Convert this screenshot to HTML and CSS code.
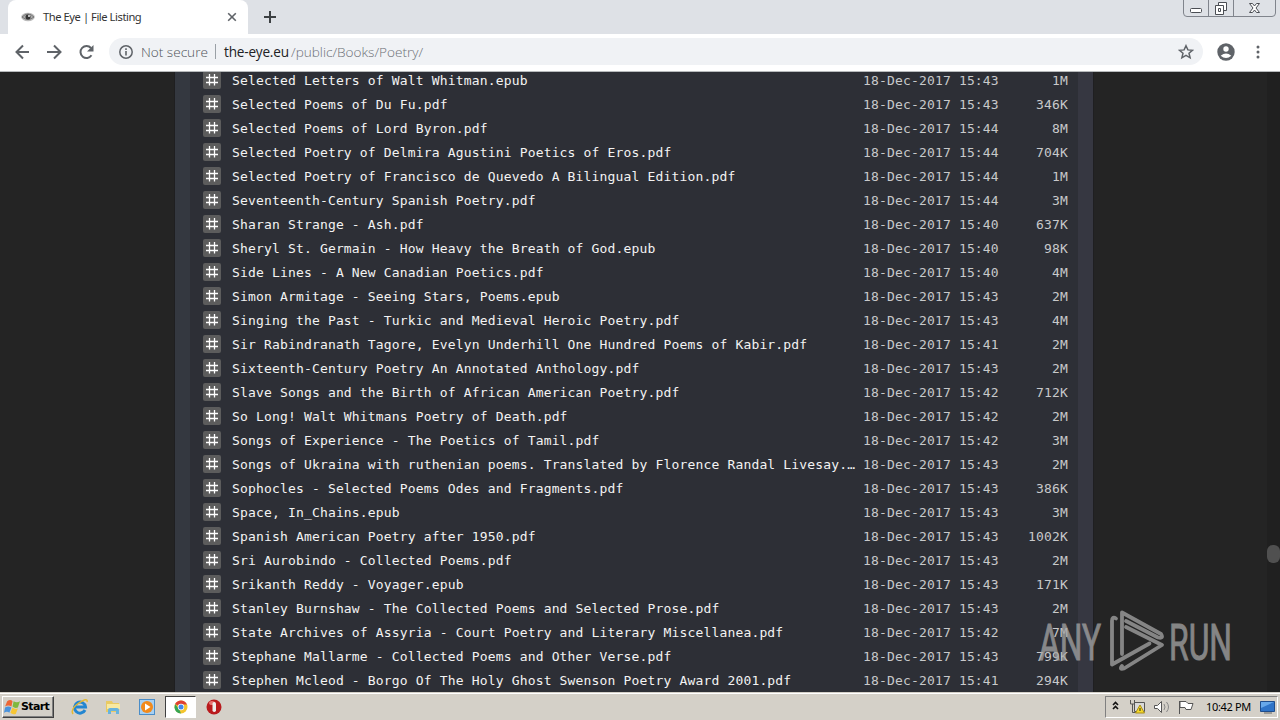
FILE: index.html
```html
<!DOCTYPE html>
<html lang="en">
<head>
<meta charset="utf-8">
<title>The Eye | File Listing</title>
<link rel="stylesheet" href="styles.css">
</head>
<body>
<svg class="defs" width="0" height="0"><symbol id="hash" viewBox="0 0 18 18"><rect width="18" height="18" rx="2" fill="#5c5c5c"/><path d="M6.500 3v11.500M11.500 3v11.500M3 6.500h12M3 11.500h12" stroke="#fff" stroke-width="1.300" fill="none"/></symbol></svg>
<div class="screen">
<header class="tabstrip">
  <div class="tab">
    <svg class="favicon" width="14" height="10" viewBox="0 0 14 10"><ellipse cx="7" cy="5" rx="6.8" ry="4.2" fill="#bbb"/><path d="M1 5Q7-1 13 5Q7 10 1 5" fill="#aaa" stroke="#777"/><circle cx="7" cy="5" r="2.5" fill="#333"/><circle cx="8" cy="4" r="1" fill="#eee"/></svg>
    <span class="tab-title">The Eye | File Listing</span>
    <svg class="tab-close" width="10" height="10" viewBox="0 0 10 10"><path d="M1.2 1.2l7.6 7.6M8.8 1.2L1.2 8.8" stroke="#5f6368" stroke-width="1.6"/></svg>
  </div>
  <svg class="plus" width="12" height="12" viewBox="0 0 12 12"><path d="M6 0v12M0 6h12" stroke="#3c4043" stroke-width="2"/></svg>
  <svg class="winbtns" width="94" height="18" viewBox="0 0 94 18"><path d="M.5 0v13q0 3.500 3.500 3.500h85q3.500 0 3.500-3.500V0M25.500 0v16M50.500 0v16" fill="none" stroke="#80848c"/><rect x="7.500" y="8.500" width="11" height="4" rx="1" fill="#fff" stroke="#4b4e54"/><path d="M35.500 5.500v-3h8v8h-3M32.500 5.500h8v9h-8zM35.500 8.500h2v3h-2z" fill="#fff" stroke="#4b4e54"/><path d="M66.500 3.500h3l2 2.500 2-2.500h3l-3.500 4.500 3.500 4.500h-3l-2-2.500-2 2.500h-3l3.500-4.500z" fill="#fff" stroke="#4b4e54"/></svg>
</header>
<div class="toolbar">
  <svg class="nav" width="80" height="16" viewBox="0 0 80 16" fill="none" stroke="#5f6368" stroke-width="2"><path d="M14 8H2M8 1.500L1.500 8 8 14.500M32 8h13M39 1.500L45.500 8 39 14.500M76.500 11.300A6 6 0 1 1 76 4"/><path d="M78.500 1v6.500H72z" fill="#5f6368" stroke="none"/></svg>
  <div class="omnibox">
    <svg width="14" height="14" viewBox="0 0 14 14"><circle cx="7" cy="7" r="6.200" fill="none" stroke="#5f6368" stroke-width="1.500"/><path d="M7 6v4.500M7 3.300v1.600" stroke="#5f6368" stroke-width="1.600"/></svg>
    <span class="secure">Not secure</span><span class="divider"></span>
    <span class="host">the-eye.eu</span><span class="path">/public/Books/Poetry/</span>
    <svg class="star" width="16" height="16" viewBox="0 0 16 16"><path d="M8 1.700l1.900 4.200 4.600.4-3.500 3 1.100 4.500L8 11.400l-4.100 2.400L5 9.300l-3.500-3 4.600-.4z" fill="none" stroke="#5f6368" stroke-width="1.500"/></svg>
  </div>
  <svg class="avatar" width="18" height="18" viewBox="0 0 18 18"><circle cx="9" cy="9" r="8.700" fill="#5f6368"/><circle cx="9" cy="6" r="2.700" fill="#fff"/><path d="M3.700 12.700Q9 8.300 14.300 12.700Q9 17.300 3.700 12.700" fill="#fff"/></svg>
  <svg class="dots" width="4" height="14" viewBox="0 0 4 14" fill="#5f6368"><circle cx="2" cy="2" r="1.500"/><circle cx="2" cy="7" r="1.500"/><circle cx="2" cy="12" r="1.500"/></svg>
</div>
<main class="page">
  <div class="panel"><ul class="files">
    <li><svg><use href="#hash"/></svg><a>Selected Letters of Walt Whitman.epub</a><time>18-Dec-2017 15:43</time><b>1M</b></li>
    <li><svg><use href="#hash"/></svg><a>Selected Poems of Du Fu.pdf</a><time>18-Dec-2017 15:43</time><b>346K</b></li>
    <li><svg><use href="#hash"/></svg><a>Selected Poems of Lord Byron.pdf</a><time>18-Dec-2017 15:44</time><b>8M</b></li>
    <li><svg><use href="#hash"/></svg><a>Selected Poetry of Delmira Agustini Poetics of Eros.pdf</a><time>18-Dec-2017 15:44</time><b>704K</b></li>
    <li><svg><use href="#hash"/></svg><a>Selected Poetry of Francisco de Quevedo A Bilingual Edition.pdf</a><time>18-Dec-2017 15:44</time><b>1M</b></li>
    <li><svg><use href="#hash"/></svg><a>Seventeenth-Century Spanish Poetry.pdf</a><time>18-Dec-2017 15:44</time><b>3M</b></li>
    <li><svg><use href="#hash"/></svg><a>Sharan Strange - Ash.pdf</a><time>18-Dec-2017 15:40</time><b>637K</b></li>
    <li><svg><use href="#hash"/></svg><a>Sheryl St. Germain - How Heavy the Breath of God.epub</a><time>18-Dec-2017 15:40</time><b>98K</b></li>
    <li><svg><use href="#hash"/></svg><a>Side Lines - A New Canadian Poetics.pdf</a><time>18-Dec-2017 15:40</time><b>4M</b></li>
    <li><svg><use href="#hash"/></svg><a>Simon Armitage - Seeing Stars, Poems.epub</a><time>18-Dec-2017 15:43</time><b>2M</b></li>
    <li><svg><use href="#hash"/></svg><a>Singing the Past - Turkic and Medieval Heroic Poetry.pdf</a><time>18-Dec-2017 15:43</time><b>4M</b></li>
    <li><svg><use href="#hash"/></svg><a>Sir Rabindranath Tagore, Evelyn Underhill One Hundred Poems of Kabir.pdf</a><time>18-Dec-2017 15:41</time><b>2M</b></li>
    <li><svg><use href="#hash"/></svg><a>Sixteenth-Century Poetry An Annotated Anthology.pdf</a><time>18-Dec-2017 15:43</time><b>2M</b></li>
    <li><svg><use href="#hash"/></svg><a>Slave Songs and the Birth of African American Poetry.pdf</a><time>18-Dec-2017 15:42</time><b>712K</b></li>
    <li><svg><use href="#hash"/></svg><a>So Long! Walt Whitmans Poetry of Death.pdf</a><time>18-Dec-2017 15:42</time><b>2M</b></li>
    <li><svg><use href="#hash"/></svg><a>Songs of Experience - The Poetics of Tamil.pdf</a><time>18-Dec-2017 15:42</time><b>3M</b></li>
    <li><svg><use href="#hash"/></svg><a>Songs of Ukraina with ruthenian poems. Translated by Florence Randal Livesay.…</a><time>18-Dec-2017 15:43</time><b>2M</b></li>
    <li><svg><use href="#hash"/></svg><a>Sophocles - Selected Poems Odes and Fragments.pdf</a><time>18-Dec-2017 15:43</time><b>386K</b></li>
    <li><svg><use href="#hash"/></svg><a>Space, In_Chains.epub</a><time>18-Dec-2017 15:43</time><b>3M</b></li>
    <li><svg><use href="#hash"/></svg><a>Spanish American Poetry after 1950.pdf</a><time>18-Dec-2017 15:43</time><b>1002K</b></li>
    <li><svg><use href="#hash"/></svg><a>Sri Aurobindo - Collected Poems.pdf</a><time>18-Dec-2017 15:43</time><b>2M</b></li>
    <li><svg><use href="#hash"/></svg><a>Srikanth Reddy - Voyager.epub</a><time>18-Dec-2017 15:43</time><b>171K</b></li>
    <li><svg><use href="#hash"/></svg><a>Stanley Burnshaw - The Collected Poems and Selected Prose.pdf</a><time>18-Dec-2017 15:43</time><b>2M</b></li>
    <li><svg><use href="#hash"/></svg><a>State Archives of Assyria - Court Poetry and Literary Miscellanea.pdf</a><time>18-Dec-2017 15:42</time><b>7M</b></li>
    <li><svg><use href="#hash"/></svg><a>Stephane Mallarme - Collected Poems and Other Verse.pdf</a><time>18-Dec-2017 15:43</time><b>799K</b></li>
    <li><svg><use href="#hash"/></svg><a>Stephen Mcleod - Borgo Of The Holy Ghost Swenson Poetry Award 2001.pdf</a><time>18-Dec-2017 15:41</time><b>294K</b></li>
  </ul></div>
  <div class="scrollbar"><div class="thumb"></div></div>
  <svg class="watermark" width="204" height="70" viewBox="0 0 204 70"><g fill="#a6a6a6" stroke="#a6a6a6" stroke-width="1" font-family="Roboto, sans-serif" font-size="50"><text x="4" y="51.500" textLength="62" lengthAdjust="spacingAndGlyphs">ANY</text><text x="134" y="51.500" textLength="63" lengthAdjust="spacingAndGlyphs">RUN</text></g><g fill="none" stroke="#a6a6a6" stroke-width="3.800" stroke-linejoin="round" stroke-linecap="round"><path d="M81 10.500Q77 8 77 13V56.500L114.500 35.500"/><path d="M87 46V4.500L126 26Q129 31 123 29.500L91 13"/><path d="M91 19L127 37L89 60.500Q84 62 87 58"/></g></svg>
</main>
<footer class="taskbar">
  <div class="start"><svg width="16" height="16" viewBox="0 0 15 15"><path d="M3 2Q6 0 8 2L7 7Q4 5 1 7z" fill="#ed6635"/><path d="M9 2Q12 4 15 2L13 8Q10 9 8 7z" fill="#7fb83f"/><path d="M1 8Q4 6 7 8L5 13Q3 11 0 13z" fill="#4b93dc"/><path d="M8 8Q10 10 13 9L11 14Q8 15 6 13z" fill="#f7c633"/></svg><span>Start</span></div>
  <svg class="ie" width="18" height="18" viewBox="0 0 18 18"><path d="M14 12A5.500 5.500 0 1 1 14.500 9H5" fill="none" stroke="#2386d1" stroke-width="3"/><path d="M2 16Q-1 11 8 5Q17-1 16 4" fill="none" stroke="#e6b932" stroke-width="1.500"/></svg>
  <svg class="folder" width="16" height="16" viewBox="0 0 16 16"><path d="M1 2h6l1 2h6v9H1z" fill="#e9ca63"/><path d="M2 5h13v5H2z" fill="#f8e9a1"/><path d="M3 15v-4q0-2 2-2h7q2 0 2 2v4h-3v-3H6v3z" fill="#68b3dd"/></svg>
  <svg class="media" width="16" height="16" viewBox="0 0 16 16"><rect x=".5" y=".5" width="15" height="15" fill="#a7d0f2" stroke="#4a8dc8"/><circle cx="8" cy="8" r="6" fill="#f28a1b"/><path d="M6 4.500v7L11.500 8z" fill="#fff"/></svg>
  <div class="active"><svg width="14" height="14" viewBox="0 0 14 14"><circle cx="7" cy="7" r="6.500" fill="#f4c52e"/><path d="M7 7L1 4Q3 .5 7 .5t6 4H7z" fill="#df4034"/><path d="M1 4l4 5 2 4.500Q1 13 .5 7.500z" fill="#35a554"/><circle cx="7" cy="7" r="3.200" fill="#fff"/><circle cx="7" cy="7" r="2.500" fill="#4287ec"/></svg></div>
  <svg class="opera" width="16" height="16" viewBox="0 0 16 16"><circle cx="8" cy="8" r="7.500" fill="#b91a1d"/><ellipse cx="6" cy="4" rx="3" ry="2" fill="#e77373"/><rect x="6.500" y="3" width="3.500" height="10" rx="1.700" fill="#eee"/></svg>
  <div class="tray">
    <svg width="84" height="18" viewBox="0 0 84 18"><path d="M2 7l2.500-2.500L7 7M2 11l2.500-2.500L7 11" fill="none" stroke="#111" stroke-width="1.600"/><g stroke="#555" fill="#fff"><path d="M23.500 4.500h10v9h-10z" fill="#d9d9d9"/><path d="M19.500 2v4h4V2M21.500 6v8.500h5" fill="none"/><path d="M29 7l4.500 8h-9z" fill="#f5d928" stroke="#a98d16"/><path d="M29 10v3" stroke="#222"/><path d="M43.500 7.500h3l4-4v11l-4-4h-3z"/><path d="M53 6q2 3 0 6M55.500 4q4 5 0 10" fill="none" stroke="#888"/><path d="M68.500 3v13M69 3.500h6l2 2h5l-2 6h-5l-1-2h-5z"/></g></svg>
    <span class="clock">10:42 PM</span>
    <svg class="desk" width="15" height="14" viewBox="0 0 15 14"><path d="M.5 1.500h14v10H.5z" fill="#2f74c8" stroke="#1f4d8c"/><path d="M1 2h13L1 8z" fill="#67a8ea"/><path d="M4 13h8" stroke="#666"/></svg>
  </div>
</footer>
</div>
</body>
</html>
```
FILE: styles.css
```css
* { box-sizing: border-box; }
body { margin: 0; overflow: hidden; font-family: "Noto Sans", sans-serif; }
svg { display: block; flex: none; }
.defs { position: absolute; }
.screen { width: 1280px; height: 720px; display: flex; flex-direction: column; }
.tabstrip { height: 34px; flex: none; background: #dee1e6; display: flex; align-items: center; padding-left: 8px; }
.tab { width: 240px; height: 34px; background: #fff; border-radius: 8px 8px 0 0; display: flex; align-items: center; padding: 0 11px 0 13px; }
.tab-title { font-size: 11.2px; color: #333; margin-left: 8px; padding-bottom: 2px; white-space: nowrap; width: 120px; letter-spacing: -.45px; }
.tab-close { margin-left: auto; }
.plus { margin-left: 16px; }
.winbtns { margin-left: auto; margin-right: 3px; align-self: flex-start; }
.toolbar { height: 38px; flex: none; background: #fff; border-bottom: 1px solid #b7babc; display: flex; align-items: center; padding: 0 0 2px 15px; }
.omnibox { width: 1094px; height: 27px; border-radius: 14px; background: #f0f2f5; margin-left: 14px; display: flex; align-items: center; padding: 0 9px 0 10px; font-family: "Open Sans", "Noto Sans", sans-serif; font-size: 13.6px; font-weight: 300; color: #4f5358; white-space: nowrap; }
.secure { margin-left: 8px; width: 67px; }
.divider { width: 1px; height: 15px; background: #9aa0a6; margin: 0 8px 0 7px; }
.host { color: #202124; font-weight: 400; width: 67px; letter-spacing: -.2px; }
.path { color: #6c7075; }
.star { margin-left: auto; }
.avatar { margin-left: 14px; }
.dots { margin-left: 21px; }
.page { height: 620px; flex: none; position: relative; overflow: hidden; background: #242424; display: flex; }
.panel { width: 918px; margin-left: 175px; background: #2d2f36; border-left: 15px solid #343840; border-right: 15px solid #363741; box-shadow: 0 0 0 1px #1f1f21; overflow: hidden; }
.files { list-style: none; margin: -4px 0 0; padding: 0 10px 0 13px; font-family: "DejaVu Sans Mono", monospace; font-size: 13px; letter-spacing: .164px; color: #ececec; }
.files li { height: 24px; display: flex; align-items: center; white-space: pre; }
.files svg { width: 18px; height: 18px; margin-right: 11px; }
.files a { width: 631px; color: #f3f3f3; }
.files time { width: 137px; color: #c8c9cb; }
.files b { flex: 1; text-align: right; font-weight: 400; color: #c8c9cb; }
.scrollbar { width: 13px; margin-left: auto; background: #202020; padding-top: 473px; }
.thumb { width: 13px; height: 18px; border-radius: 6px; background: #505050; }
.watermark { position: absolute; left: 1035px; top: 536px; opacity: .75; }
.taskbar { height: 28px; flex: none; background: #d4d0c8; border-top: 1px solid #d4d0c8; box-shadow: inset 0 1px #fff; display: flex; align-items: center; padding: 0 2px 0 2px; }
.start { width: 52px; height: 22px; border: 1px solid; border-color: #fff #404040 #404040 #fff; box-shadow: inset -1px -1px #808080; display: flex; align-items: center; padding-left: 1px; font: bold 11px "DejaVu Sans", sans-serif; color: #000; }
.start span { width: 31px; letter-spacing: -.65px; margin-left: 1px; }
.ie { margin-left: 17px; }
.folder { margin-left: 16px; }
.media { margin-left: 18px; }
.active { width: 31px; height: 22px; background: #fff; border: 1px solid; border-color: #404040 #fff #fff #404040; margin-left: 10px; display: flex; align-items: center; justify-content: center; }
.opera { margin-left: 10px; }
.tray { width: 173px; height: 22px; margin-left: auto; border: 1px solid; border-color: #808080 #fff #fff #808080; display: flex; align-items: center; padding-left: 5px; }
.clock { font-size: 11px; margin-left: 11px; width: 46px; letter-spacing: -.35px; white-space: nowrap; color: #000; }
.desk { margin-left: 8px; }
```
